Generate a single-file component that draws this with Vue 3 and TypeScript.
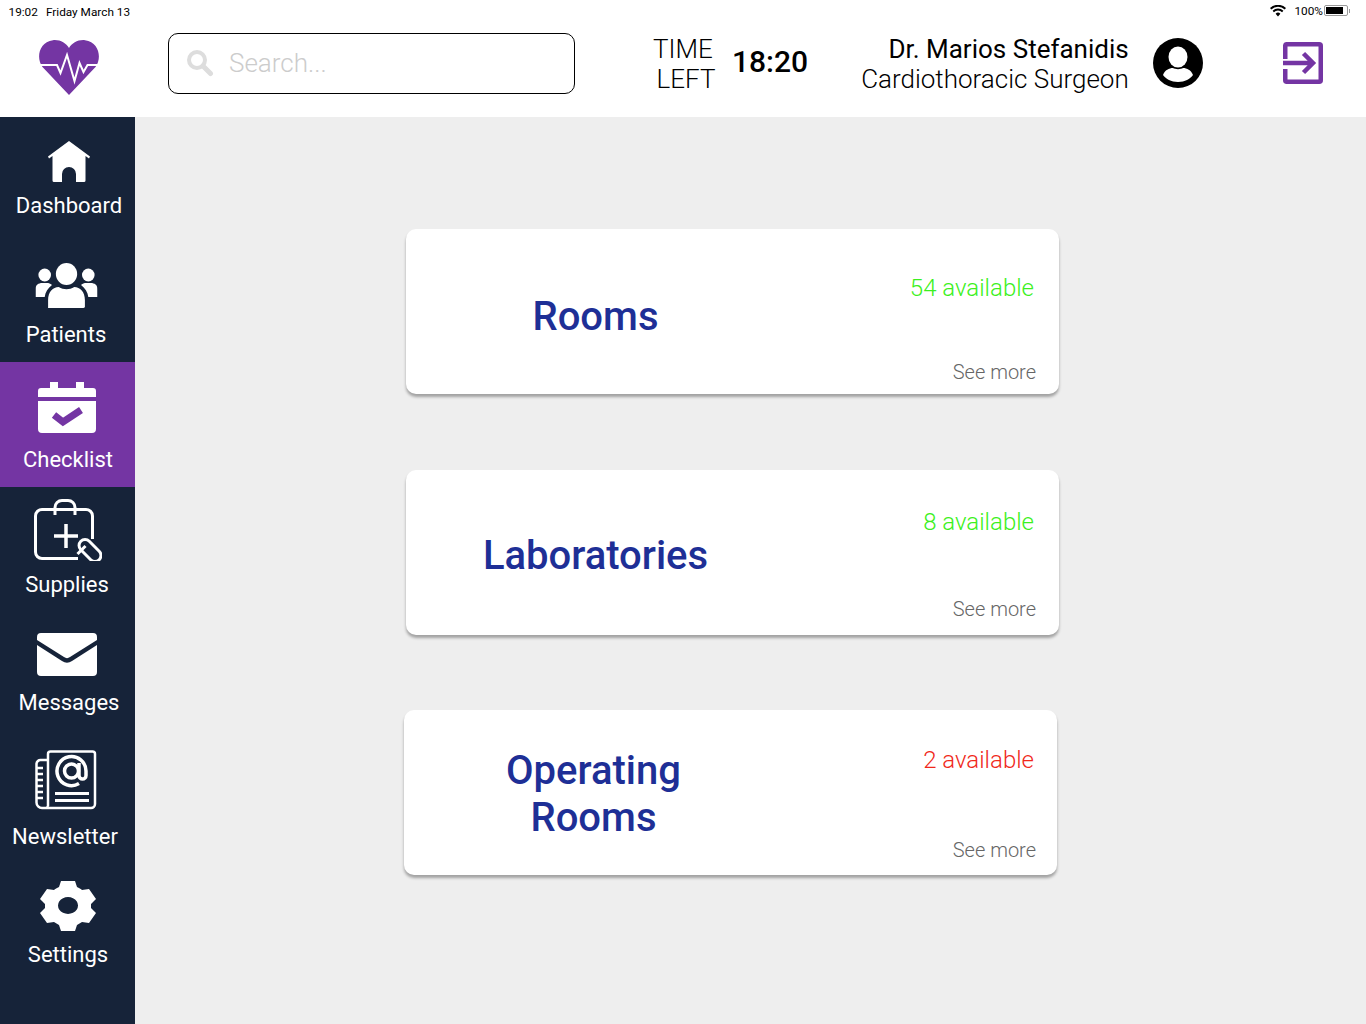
<script setup lang="ts">
interface NavItem { key: string; label: string; h: number; pad: number; gap: number; dx: number; ldx: number; active?: boolean }
const nav: NavItem[] = [
  { key: 'home', label: 'Dashboard', h: 123, pad: 24, gap: 11, dx: 1, ldx: 1.5 },
  { key: 'users', label: 'Patients', h: 122, pad: 23, gap: 13, dx: -1.5, ldx: -1.5 },
  { key: 'cal', label: 'Checklist', h: 125, pad: 20, gap: 14, dx: -1, ldx: 0.5, active: true },
  { key: 'bag', label: 'Supplies', h: 128, pad: 12, gap: 11, dx: 0, ldx: -0.5 },
  { key: 'mail', label: 'Messages', h: 125, pad: 18, gap: 14, dx: -1, ldx: 1.5 },
  { key: 'news', label: 'Newsletter', h: 130, pad: 10, gap: 14, dx: -2, ldx: -2.5 },
  { key: 'gear', label: 'Settings', h: 154, pad: 11, gap: 11, dx: 0, ldx: 0.5 },
]
const rooms = [
  { name: ['Rooms'], avail: '54 available', tone: 'ok', cls: 'one' },
  { name: ['Laboratories'], avail: '8 available', tone: 'ok', cls: 'two' },
  { name: ['Operating', 'Rooms'], avail: '2 available', tone: 'low', cls: 'three' },
]
</script>

<template>
  <div class="page">
    <header class="top">
      <div class="status">
        <div class="status-left"><span>19:02</span><span>Friday March 13</span></div>
        <div class="status-right">
          <svg class="wifi" width="16" height="12" viewBox="0 0 16 12"><path d="M8 11.5 5.6 8.8a3.4 3.4 0 0 1 4.8 0Z M3.9 7.2 2.6 5.7a7.8 7.8 0 0 1 10.8 0l-1.3 1.5a5.9 5.9 0 0 0-8.2 0Z M1.3 4.4 0 3a11.6 11.6 0 0 1 16 0l-1.3 1.4a9.8 9.8 0 0 0-13.4 0Z" fill="#000"/></svg>
          <span class="pct">100%</span>
          <span class="batt"><i></i></span><span class="nub"></span>
        </div>
      </div>
      <div class="bar">
        <div class="logo">
          <svg width="60" height="55" viewBox="0 0 60 55">
            <path d="M30 55 3.5 27C-3 19-.5 2 14 .2 21-.5 27 3 30 8c3-5 9-8.500 16-7.800C60.500 2 63 19 56.500 27Z" fill="#7435a3"/>
            <path d="M0 25h18l3.500 8L28 15l7.500 26L40.500 23l4 9 4-7H60" fill="none" stroke="#fff" stroke-width="2"/>
          </svg>
        </div>
        <div class="search">
          <svg width="28" height="28" viewBox="0 0 28 28"><circle cx="11" cy="11" r="8" fill="none" stroke="#ddd" stroke-width="4"/><path d="m17 17 7.500 7.500" stroke="#ddd" stroke-width="5" stroke-linecap="round"/></svg>
          <span class="ph">Search...</span>
        </div>
        <div class="timer">
          <div class="time-label"><span>TIME</span><span class="left">LEFT</span></div>
          <strong>18:20</strong>
        </div>
        <div class="user">
          <div class="who"><b>Dr. Marios Stefanidis</b><span>Cardiothoracic Surgeon</span></div>
          <svg class="avatar" width="50" height="50" viewBox="0 0 50 50">
            <circle cx="25" cy="25" r="25" fill="#000"/>
            <ellipse cx="25" cy="19" rx="9.500" ry="10.500" fill="#fff"/>
            <path d="M10 37c2-5 6-7 10-7 2 1.500 8 1.500 10 0 4 0 8 2 10 7-3 4-8 7-15 7s-12-3-15-7Z" fill="#fff"/>
          </svg>
        </div>
        <svg class="exit" width="42" height="42" viewBox="0 0 42 42">
          <path d="M3.250 17V3.500a1.500 1.500 0 0 1 1.500-1.250h32.500a1.500 1.500 0 0 1 1.500 1.500v34.500a1.500 1.500 0 0 1-1.500 1.500H4.750a1.500 1.500 0 0 1-1.500-1.500V27" fill="none" stroke="#7435a3" stroke-width="4.500"/>
          <path d="M1 21h29M21.500 11.500 31 21l-9.500 9.500" fill="none" stroke="#7435a3" stroke-width="4.500"/>
        </svg>
      </div>
    </header>
    <div class="body">
      <nav class="side">
        <div v-for="n in nav" :key="n.key" class="item" :class="{ active: n.active }" :style="{ height: n.h + 'px', paddingTop: n.pad + 'px' }">
          <div class="icon" :style="{ transform: `translateX(${n.dx}px)` }">
            <svg v-if="n.key === 'home'" width="42" height="41" viewBox="0 0 42 41"><path d="M21 0 42 15.500l-1 2-3.500-2.500v24.500A1.500 1.500 0 0 1 36 41H28v-8a7 7 0 0 0-14 0v8H6a1.500 1.500 0 0 1-1.500-1.500V15L1 17.500l-1-2Z" fill="#fff"/></svg>
            <svg v-else-if="n.key === 'users'" width="62" height="46" viewBox="0 0 64 46" preserveAspectRatio="none">
              <g fill="#fff"><circle cx="32" cy="11" r="11"/><circle cx="9.500" cy="12" r="6.500"/><circle cx="54.500" cy="12" r="6.500"/>
              <path d="M13 45a3 3 0 0 1-0-1V37c0-8 5-13 11-13 5 3 11 3 16 0 6 0 11 5 11 13v7a2 2 0 0 1-2 1H15Z"/>
              <path d="M0 34v-8c0-4 3-6 7-6h6c1 0 3 1 4 2-4 3-7 7-7.500 12ZM64 34v-8c0-4-3-6-7-6h-6c-1 0-3 1-4 2 4 3 7 7 7.500 12Z"/></g>
            </svg>
            <svg v-else-if="n.key === 'cal'" width="58" height="51" viewBox="0 0 58 51">
              <path fill="#fff" d="M12 0h8v6h18V0h8v6h9a3 3 0 0 1 3 3v6H0V9a3 3 0 0 1 3-3h9ZM0 19h58v28a4 4 0 0 1-4 4H4a4 4 0 0 1-4-4Z"/>
              <path d="M16 33l9 7 18-12" fill="none" stroke="#7435a3" stroke-width="7"/>
            </svg>
            <svg v-else-if="n.key === 'bag'" width="68" height="62" viewBox="0 0 68 62">
              <g fill="none" stroke="#fff" stroke-width="3"><path d="M44 59.500H8a6.500 6.500 0 0 1-6.500-6.500V17A6.500 6.500 0 0 1 8 10.500h44a6.500 6.500 0 0 1 6.500 6.500v23"/><path d="M21 16V8.500a7 7 0 0 1 7-7h6a7 7 0 0 1 7 7V16"/><path d="M32 25v24M20 37h24" stroke-width="3.500"/>
              <rect x="43" y="45.500" width="26" height="12" rx="6" transform="rotate(45 56 51.500)"/><path d="m51.500 47-8 8" stroke-width="3"/></g>
            </svg>
            <svg v-else-if="n.key === 'mail'" width="60" height="43" viewBox="0 0 60 43">
              <path fill="#fff" d="M4 0h52a4 4 0 0 1 4 4v3L33 24a5 5 0 0 1-6 0L0 7V4a4 4 0 0 1 4-4ZM0 12l25 16a9 9 0 0 0 10 0l25-16v27a4 4 0 0 1-4 4H4a4 4 0 0 1-4-4Z"/>
            </svg>
            <svg v-else-if="n.key === 'news'" width="62" height="60" viewBox="0 0 62 60">
              <g fill="none" stroke="#fff" stroke-width="2.500"><path d="M13 56V4a2.500 2.500 0 0 1 2.500-2.500h42A2.500 2.500 0 0 1 60 4v50a4 4 0 0 1-4 4H7a5.500 5.500 0 0 1-5.500-5.500V14A4 4 0 0 1 6 10h7M13 56a2.500 2.500 0 0 1-3 2"/><path d="M2 18h6M2 24h6M2 30h6M2 36h6M2 42h6M2 48h6" stroke-width="2.500"/>
              <path d="M20 43.500h34M20 50.500h34" stroke-width="3"/>
              <circle cx="36.500" cy="21" r="7" stroke-width="3.500"/><path d="M44 13v12.500a3.500 3.500 0 0 0 7 0V21a14.500 14.500 0 1 0-7 12.500" stroke-width="3.500"/></g>
            </svg>
            <svg v-else width="56" height="50" viewBox="0 0 56 50">
              <path fill="#fff" fill-rule="evenodd" d="M21 0h14l2 6c2 1 4 2 5 3l7-1 7 10-5 5v4l5 5-7 10-7-1-5 3-2 6H21l-2-6-5-3-7 1-7-10 5-5v-4l-5-5 7-10 7 1c1-1 3-2 5-3ZM28 16a10 8.500 0 1 0 .01 0Z"/>
            </svg>
          </div>
          <span class="label" :style="{ transform: `translateX(${n.ldx}px)`, marginTop: n.gap + 'px' }">{{ n.label }}</span>
        </div>
      </nav>
      <main class="main">
        <section v-for="r in rooms" :key="r.avail" class="card" :class="r.cls">
          <h2><span v-for="l in r.name" :key="l">{{ l }}</span></h2>
          <div class="meta">
            <span class="avail" :class="r.tone">{{ r.avail }}</span>
            <span class="more">See more</span>
          </div>
        </section>
      </main>
    </div>
  </div>
</template>

<style>
html, body { margin: 0; padding: 0; background: #fff; }
</style>

<style scoped>
.page { width: 1366px; height: 1024px; overflow: hidden; display: flex; flex-direction: column; font-family: Roboto, "Liberation Sans", sans-serif; color: #000; }
.top { height: 117px; flex: none; background: #fff; display: flex; flex-direction: column; }
.status { height: 22px; display: flex; justify-content: space-between; align-items: center; padding: 2px 16px 0 8.500px; box-sizing: border-box; font-size: 11.800px; }
.status-left { display: flex; gap: 8px; }
.status-right { display: flex; align-items: center; margin-top: -3px; }
.wifi { margin: 0 8px 0 1px; }
.pct { margin-right: 1px; }
.batt { border: 1px solid #999; border-radius: 2px; padding: 1px; display: block; box-sizing: content-box; width: 20px; height: 7px; }
.batt i { display: block; width: 17px; height: 7px; background: #000; }
.nub { width: 1px; height: 4px; background: #999; margin-left: 1px; }
.bar { flex: 1; display: flex; align-items: flex-start; position: relative; }
.logo { width: 39px; padding: 18px 0 0 39px; box-sizing: content-box; }
.search { margin: 11px 0 0 90px; width: 407px; height: 61px; box-sizing: border-box; border: 1px solid #000; border-radius: 10px; display: flex; align-items: center; padding-left: 17px; gap: 15px; font-size: 26px; font-weight: 300; color: #ccc; }
.search svg { flex: none; margin-top: -2px; }
.ph { margin-top: -2px; }
.timer { display: flex; align-items: center; margin: 12px 0 0 78px; gap: 18px; }
.time-label { display: flex; flex-direction: column; align-items: flex-start; font-size: 26px; font-weight: 300; line-height: 30px; width: 61px; }
.time-label .left { margin-left: 3.500px; }
.timer strong { font-size: 30px; font-weight: 500; margin-top: -6px; }
.user { display: flex; align-items: center; margin: 12px 0 0 53px; gap: 24px; }
.who { display: flex; flex-direction: column; align-items: flex-end; font-size: 26px; line-height: 30px; }
.who b { font-weight: 400; }
.who span { font-weight: 300; }
.avatar { margin-top: -2px; }
.exit { position: absolute; left: 1282px; top: 20px; }
.body { flex: 1; display: flex; min-height: 0; }
.side { width: 135px; flex: none; background: #162339; display: flex; flex-direction: column; overflow: hidden; }
.item { box-sizing: border-box; flex: none; display: flex; flex-direction: column; align-items: center; color: #fff; }
.item.active { background: #7435a3; }
.icon { display: flex; align-items: center; justify-content: center; }
.icon svg { display: block; }
.label { font-size: 22px; line-height: 26px; white-space: nowrap; }
.main { flex: 1; background: #eee; display: flex; flex-direction: column; }
.card { box-sizing: border-box; width: 653px; height: 165px; background: #fff; border-radius: 10px; box-shadow: 0 3px 3px rgba(0,0,0,.32); display: flex; margin-left: 271px; }
.card.one { margin-top: 112px; }
.card.two { margin-top: 76px; }
.card.three { margin-top: 75px; margin-left: 269px; }
h2 { margin: 0; width: 379px; flex: none; display: flex; flex-direction: column; align-items: center; justify-content: center; font-size: 40px; line-height: 47px; font-weight: 500; color: #1e2f96; }
.one h2 { padding-top: 10px; }
.two h2 { padding-top: 6px; }
.three h2 { padding-top: 2px; }
.meta { flex: 1; display: flex; flex-direction: column; align-items: flex-end; justify-content: space-between; padding-right: 23px; }
.one .meta { padding-top: 42px; padding-bottom: 8px; }
.two .meta { padding-top: 35px; padding-bottom: 12px; }
.three .meta { padding-top: 33px; padding-bottom: 11px; padding-right: 21px; }
.avail { font-size: 24px; line-height: 34px; font-weight: 300; margin-right: 2px; }
.avail.ok { color: #3bf020; }
.avail.low { color: #f0281a; }
.more { font-size: 20px; line-height: 28px; font-weight: 300; color: #666; }
</style>
